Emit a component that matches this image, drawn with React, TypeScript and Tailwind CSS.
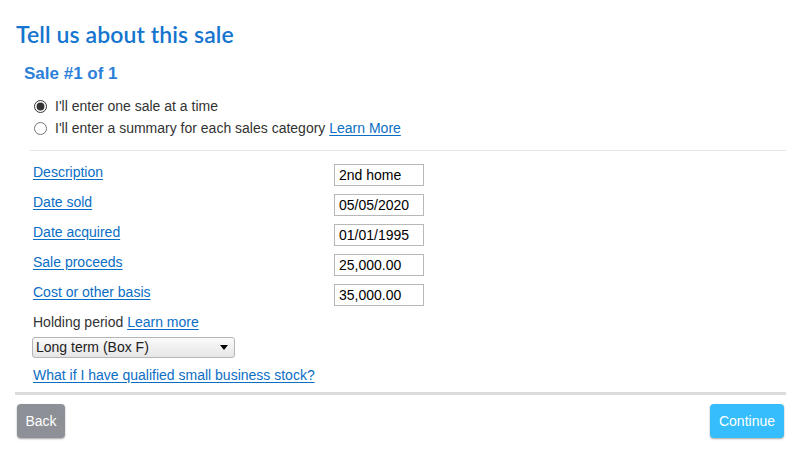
import { useState } from 'react';

const FIELDS = [
  { label: 'Description', value: '2nd home' },
  { label: 'Date sold', value: '05/05/2020' },
  { label: 'Date acquired', value: '01/01/1995' },
  { label: 'Sale proceeds', value: '25,000.00' },
  { label: 'Cost or other basis', value: '35,000.00' },
];

const linkCls = 'text-[#0b6ec5] underline underline-offset-2';

export default function App() {
  const [mode, setMode] = useState('one');

  return (
    <div className="h-[457px] w-[798px] bg-white font-['Liberation_Sans',Arial,sans-serif] text-[14px] text-[#333]">
      <div className="pl-[16px] pr-[12px] pt-[20px]">
        <h1 className="font-['Lato',sans-serif] text-[23px] font-semibold leading-[28px] tracking-[0.1px] text-[#1575cf]">
          Tell us about this sale
        </h1>

        <div className="mt-[16px] pl-[14px]">
          <h2 className="-ml-[6px] text-[17px] font-bold leading-[20px] text-[#2d7fd8]">Sale #1 of 1</h2>

          {/* 방식 선택 */}
          <div className="mt-[11px] flex flex-col pl-[4px]">
            <label className="flex h-[22px] items-center gap-[8px]">
              <input
                type="radio"
                name="mode"
                checked={mode === 'one'}
                onChange={() => setMode('one')}
                className="m-0 h-[13px] w-[13px] accent-[#333]"
              />
              <span>I'll enter one sale at a time</span>
            </label>
            <label className="flex h-[22px] items-center gap-[8px]">
              <input
                type="radio"
                name="mode"
                checked={mode === 'summary'}
                onChange={() => setMode('summary')}
                className="m-0 h-[13px] w-[13px] accent-[#333]"
              />
              <span>
                I'll enter a summary for each sales category <a href="#" className={linkCls}>Learn More</a>
              </span>
            </label>
          </div>

          <div className="mt-[11px] h-px bg-[#e6e6e6]" />

          {/* 입력 항목 */}
          <div className="mt-[13px] flex flex-col pl-[3px]">
            {FIELDS.map((f) => (
              <div key={f.label} className="flex h-[30px] items-start">
                <a href="#" className={`${linkCls} w-[301px] leading-[16px]`}>
                  {f.label}
                </a>
                <input
                  defaultValue={f.value}
                  className="h-[22px] w-[90px] border border-[#b8b8b8] px-[4px] text-[14px] text-black outline-none"
                />
              </div>
            ))}
          </div>

          <div className="-mt-[1px] pl-[3px] leading-[18px]">
            Holding period <a href="#" className={linkCls}>Learn more</a>
          </div>

          <div className="relative ml-[2px] mt-[6px] h-[21px] w-[203px] rounded-[3px] border border-[#b5b5b5] bg-gradient-to-b from-[#fafafa] to-[#e6e6e6]">
            <span className="absolute left-[3px] top-[1px] text-[14px] leading-[17px] text-[#222]">Long term (Box F)</span>
            <span className="absolute right-[6px] top-[7px] h-0 w-0 border-x-[4px] border-t-[5px] border-x-transparent border-t-black" />
          </div>

          <div className="mt-[8px] pl-[3px] leading-[18px]">
            <a href="#" className={linkCls}>What if I have qualified small business stock?</a>
          </div>
        </div>

        <div className="-ml-[1px] mt-[8px] h-[3px] w-[771px] bg-[#dcdcdc]" />

        <div className="mt-[9px] flex w-[768px] justify-between pl-[1px]">
          <button className="h-[34px] w-[48px] rounded-[4px] bg-[#8e9097] text-[14px] text-white shadow-[0_1px_2px_rgba(0,0,0,0.35)]">
            Back
          </button>
          <button className="h-[34px] w-[74px] rounded-[4px] bg-[#35bdfd] text-[14px] text-white shadow-[0_1px_2px_rgba(0,0,0,0.35)]">
            Continue
          </button>
        </div>
      </div>
    </div>
  );
}
